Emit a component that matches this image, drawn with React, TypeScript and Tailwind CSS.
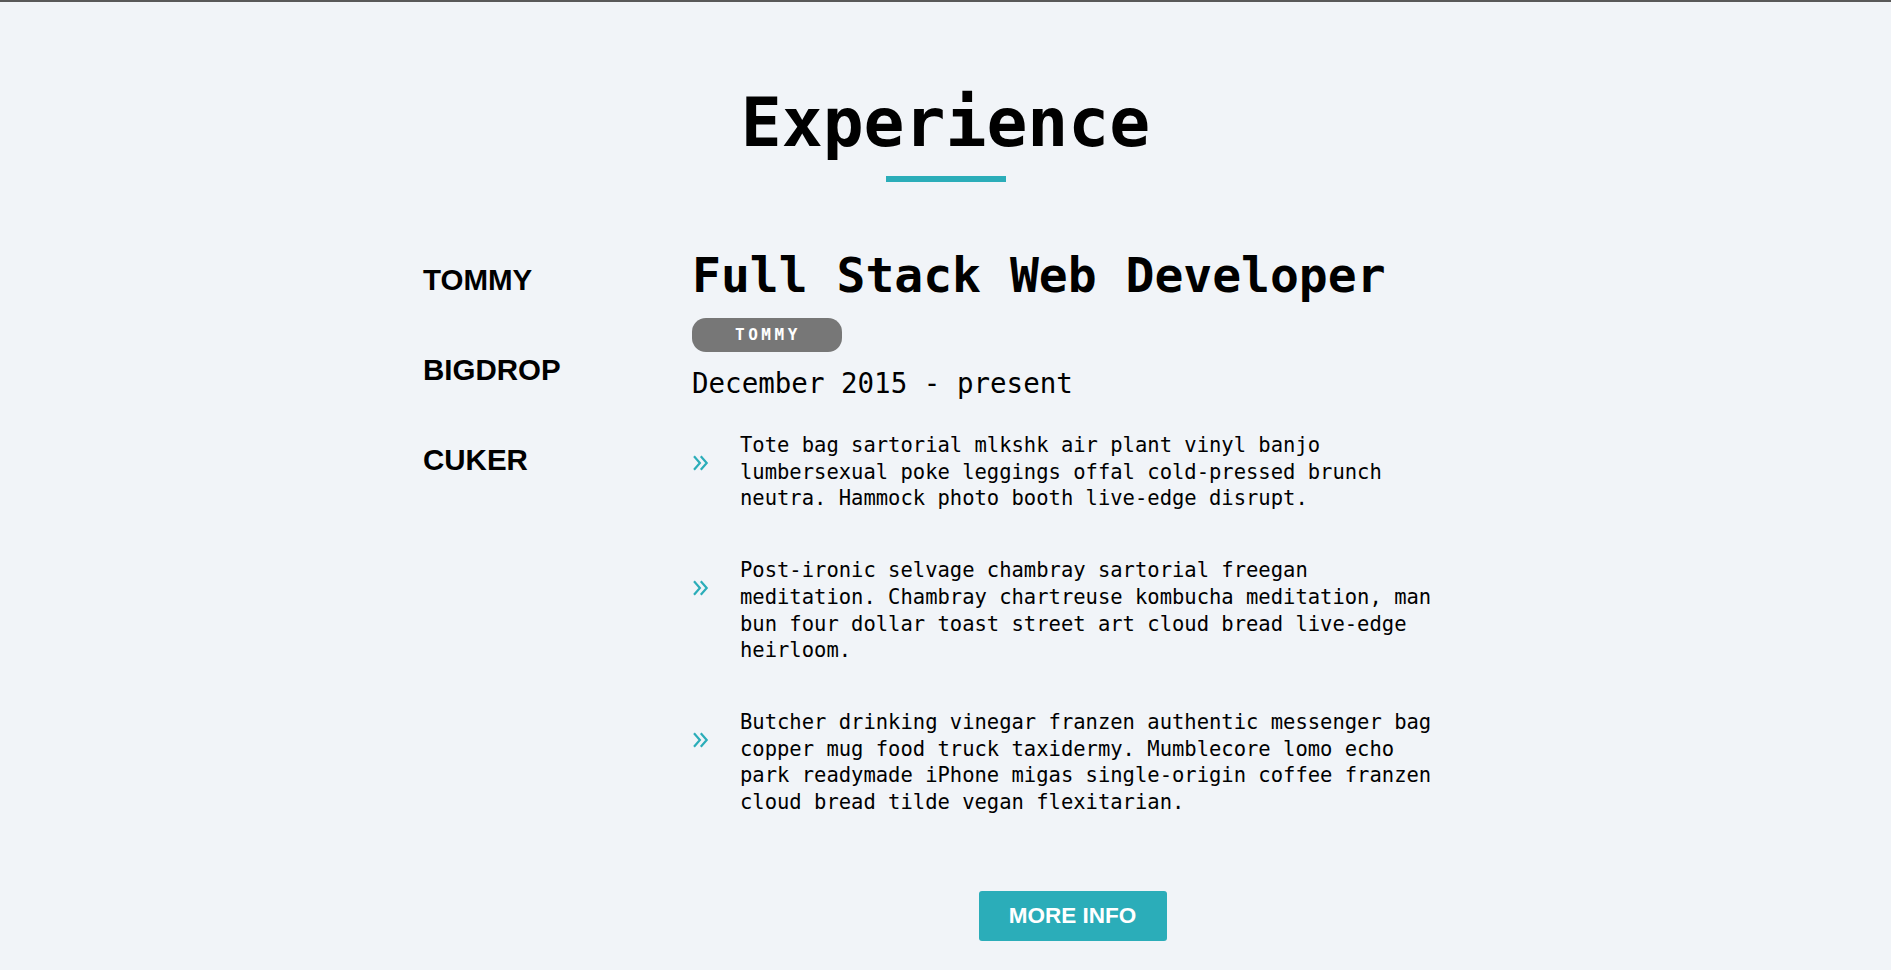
const jobs = [
  {
    id: 1,
    company: "TOMMY",
    title: "Full Stack Web Developer",
    dates: "December 2015 - present",
    duties: [
      "Tote bag sartorial mlkshk air plant vinyl banjo lumbersexual poke leggings offal cold-pressed brunch neutra. Hammock photo booth live-edge disrupt.",
      "Post-ironic selvage chambray sartorial freegan meditation. Chambray chartreuse kombucha meditation, man bun four dollar toast street art cloud bread live-edge heirloom.",
      "Butcher drinking vinegar franzen authentic messenger bag copper mug food truck taxidermy. Mumblecore lomo echo park readymade iPhone migas single-origin coffee franzen cloud bread tilde vegan flexitarian.",
    ],
  },
];

const companies = ["TOMMY", "BIGDROP", "CUKER"];

const Chevrons = () => (
  <svg width="17" height="16" viewBox="0 0 17 16" fill="none" className="shrink-0 mt-[23px]">
    <path d="M2 1.2 L7.9 8 L2 14.8" stroke="#2badb9" strokeWidth="2.2" />
    <path d="M8.8 1.2 L14.7 8 L8.8 14.8" stroke="#2badb9" strokeWidth="2.2" />
  </svg>
);

const App = () => {
  const job = jobs[0];
  return (
    <div className="min-h-[970px] bg-[#f1f4f8] border-t-2 border-[#595959] font-['DejaVu_Sans_Mono',monospace] text-black">
      {/* title */}
      <div className="flex flex-col items-center pt-[87px]">
        <h1 className="text-[68px] leading-[67px] font-bold">Experience</h1>
        <div className="w-[120px] h-[6px] bg-[#2badb9] mt-[20px]" />
      </div>

      <div className="w-[1045px] mx-auto mt-[65px] flex items-start">
        {/* companies */}
        <div className="w-[269px] shrink-0 mt-[16px] flex flex-col gap-[56px] font-['Liberation_Sans',Arial,sans-serif]">
          {companies.map((c) => (
            <button
              key={c}
              className="text-left text-[29.5px] leading-[34px] font-bold"
            >
              {c}
            </button>
          ))}
        </div>

        {/* job info */}
        <div className="w-[761px] flex flex-col">
          <h2 className="text-[48px] leading-[56px] font-bold">{job.title}</h2>
          <span className="mt-[15px] w-[150px] h-[34px] rounded-[14px] bg-[#777777] text-white text-[16px] font-bold tracking-[3.6px] flex items-center justify-center pl-[2px]">
            {job.company}
          </span>
          <p className="mt-[15px] text-[27.5px] leading-[33px]">{job.dates}</p>

          <div className="mt-[32px] flex flex-col gap-[45px]">
            {job.duties.map((d, i) => (
              <div key={i} className="flex items-start gap-[31px]">
                <Chevrons />
                <p className="text-[20.5px] leading-[26.7px] w-[713px]">{d}</p>
              </div>
            ))}
          </div>

          <div className="flex justify-center mt-[75px]">
            <button className="w-[188px] h-[50px] rounded-[3px] bg-[#2badb9] text-white text-[22.5px] font-bold font-['Liberation_Sans',Arial,sans-serif]">
              MORE INFO
            </button>
          </div>
        </div>
      </div>
    </div>
  );
};

export default App;
